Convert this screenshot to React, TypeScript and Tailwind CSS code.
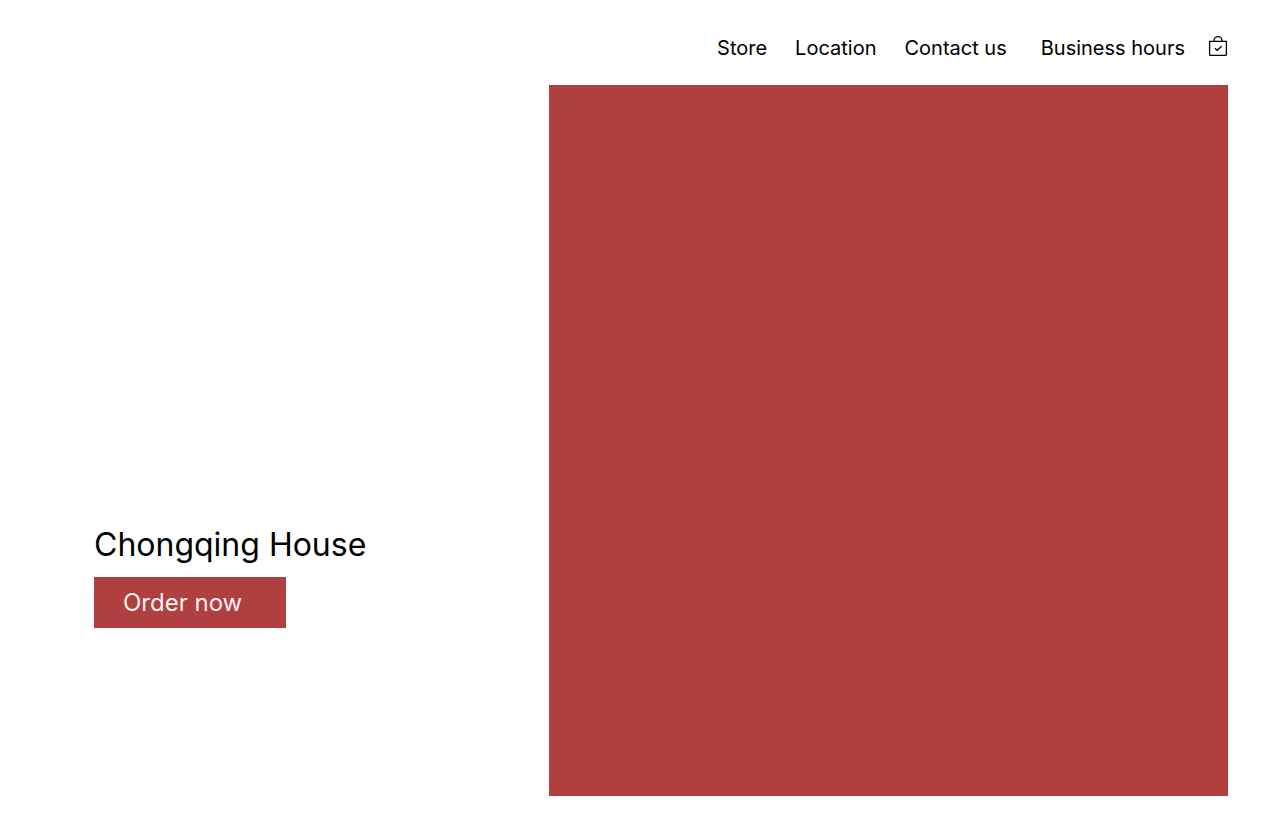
import React from "react";

const links = [
  { label: "Store", className: "" },
  { label: "Location", className: "" },
  { label: "Contact us", className: "" },
  { label: "Business hours", className: "ml-1.5" },
];

function BagIcon() {
  return (
    <svg viewBox="0 0 20 23" width="20" height="23" fill="none" stroke="currentColor" strokeWidth="1.3" aria-hidden="true">
      <path d="M1.6 5.4h16.8v13a1 1 0 0 1-1 1H2.6a1 1 0 0 1-1-1z" />
      <path d="M6 5.4V4.6a4 4 0 0 1 8 0v.8" />
      <path d="M7 12.2l2.2 2.1 4.4-4" />
    </svg>
  );
}

export default function App() {
  return (
    <div className="flex min-h-screen flex-col bg-white pr-[52px] pb-9 font-['Inter',sans-serif] text-black">
      <header className="flex h-[85px] items-center justify-end pt-2.5">
        <nav className="flex items-center gap-7 text-xl">
          {links.map((link) => (
            <a key={link.label} href="#" className={link.className}>
              {link.label}
            </a>
          ))}
        </nav>
        <button type="button" aria-label="Shopping bag" className="ml-[23px]">
          <BagIcon />
        </button>
      </header>
      <main className="flex grow">
        <section className="flex w-[549px] shrink-0 flex-col items-start justify-end pb-[168px] pl-[94px]">
          <h1 className="text-[32px] leading-10">Chongqing House</h1>
          <button type="button" className="mt-3 h-[51px] w-48 bg-[#b03f3f] pl-[29px] text-left text-2xl text-[#fbf3f3]">
            Order now
          </button>
        </section>
        <div className="grow bg-[#b03f3f]" />
      </main>
    </div>
  );
}
